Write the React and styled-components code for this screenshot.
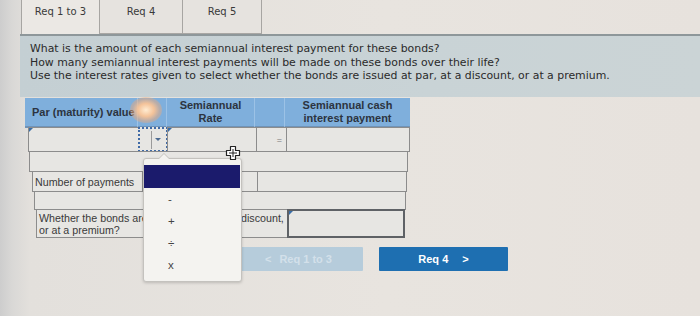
import React from 'react';
import styled, { createGlobalStyle } from 'styled-components';

const Global = createGlobalStyle`
  html, body { margin: 0; padding: 0; }
  body { width: 700px; height: 316px; overflow: hidden; background: #e4e0db; }
`;

const Screen = styled.div`
  position: relative;
  width: 700px;
  height: 316px;
  overflow: hidden;
  display: flex;
  flex-direction: column;
  background: linear-gradient(90deg, #cdcdcd 0px, #d9d8d6 12px, #e3e0dc 30px, #e8e4df 55%, #e7e2dd 100%);
  font-family: "DejaVu Sans", Verdana, sans-serif;
  color: #2d2d2d;
`;

const TabBar = styled.div`
  display: flex;
  height: 34px;
  padding-left: 22px;
`;

const Tab = styled.div`
  width: ${p => p.$w}px;
  box-sizing: border-box;
  height: 34px;
  padding-top: 5px;
  text-align: center;
  font-size: 10px;
  line-height: 14px;
  color: #3a3a3a;
  background: ${p => (p.$active ? '#ebe8e4' : '#e6e3df')};
  border-left: 1px solid #a7a5a2;
  border-right: 1px solid #a7a5a2;
  border-bottom: ${p => (p.$active ? 'none' : '1px solid #a9a7a4')};
  margin-left: -1px;
`;

const Question = styled.div`
  margin-left: 20px;
  height: 63px;
  box-sizing: border-box;
  border-top: 2px solid #8e979a;
  background: linear-gradient(90deg, #c4cfd3 0%, #c9d3d6 60%, #cbd4d6 100%);
  padding: 6px 0 0 10px;
  font-size: 10.9px;
  line-height: 13.5px;
  color: #2a2a2a;
  white-space: nowrap;
`;

const TableWrap = styled.div`
  margin-top: 1px;
  margin-left: 25px;
  width: 385px;
  font-family: "Liberation Sans", Arial, sans-serif;
  font-size: 10.7px;
  color: #333;
`;

const Grid = styled.div`
  display: grid;
  grid-template-columns: ${p => p.$cols};
  margin-left: ${p => p.$inL || 0}px;
  margin-right: ${p => p.$inR || 0}px;
  height: ${p => p.$h}px;
`;

const HeadCell = styled.div`
  background: #7fafdc;
  border-right: 1px solid #9cc2e6;
  border-bottom: 2px solid #6f93b8;
  display: flex;
  align-items: center;
  justify-content: ${p => (p.$left ? 'flex-start' : 'center')};
  padding-left: ${p => (p.$left ? 7 : 0)}px;
  text-align: center;
  font-size: 11px;
  font-weight: bold;
  line-height: 13px;
  color: #2c3440;
  box-sizing: border-box;
  &:last-child { border-right: none; }
`;

const Cell = styled.div`
  position: relative;
  box-sizing: border-box;
  background: #e7e6e3;
  border: ${p => (p.$strong ? '2px solid #5f6266' : '1px solid #8c8c8c')};
  margin-left: -1px;
  margin-top: -1px;
  display: flex;
  align-items: center;
  justify-content: ${p => (p.$right ? 'flex-end' : 'flex-start')};
  padding-left: ${p => (p.$pad ? 2 : 0)}px;
  padding-right: ${p => (p.$right ? 4 : 0)}px;
  color: #3a3a3a;
  line-height: 12px;
  white-space: nowrap;
  overflow: hidden;
  &::before {
    content: '';
    display: ${p => (p.$marker ? 'block' : 'none')};
    position: absolute;
    left: 0;
    top: 0;
    border-left: 4px solid #3a6ea8;
    border-bottom: 4px solid transparent;
  }
`;

const Spread = styled.span`
  word-spacing: 0.5px;
`;

const Operator = styled.div`
  position: relative;
  box-sizing: border-box;
  margin-left: -1px;
  margin-top: -1px;
  border: 2px dotted #3f6aa6;
  background: #e7e6e3;
  display: flex;
  align-items: center;
  justify-content: flex-end;
  padding-right: 3px;
`;

const OpInner = styled.div`
  width: 11px;
  height: 18px;
  border-left: 1px solid #9a9a9a;
  display: flex;
  align-items: center;
  justify-content: center;
  &::after {
    content: '';
    border-left: 3px solid transparent;
    border-right: 3px solid transparent;
    border-top: 3px solid #4d6a90;
  }
`;

const Eq = styled.span`
  font-size: 9px;
  color: #777;
`;

const Footer = styled.div`
  display: flex;
  gap: 16px;
  margin-top: 9px;
  padding-left: 234px;
`;

const Btn = styled.div`
  width: 129px;
  height: 24px;
  display: flex;
  align-items: center;
  justify-content: center;
  gap: ${p => (p.$primary ? 14 : 8)}px;
  background: ${p => (p.$primary ? '#1e6fb1' : '#b6ccdb')};
  color: ${p => (p.$primary ? '#ffffff' : '#d3e0ea')};
  font-family: "Liberation Sans", Arial, sans-serif;
  font-size: 11px;
  font-weight: bold;
  border-radius: 1px;
`;

const Menu = styled.div`
  position: absolute;
  left: 143px;
  top: 158px;
  width: 99px;
  height: 124px;
  box-sizing: border-box;
  background: #f4f3f0;
  border: 1px solid #c4c2be;
  border-radius: 3px;
  box-shadow: 0 1px 3px rgba(0, 0, 0, 0.18);
  padding-top: 6px;
  font-family: "Liberation Sans", Arial, sans-serif;
  font-size: 11.5px;
  color: #444;
  &::before {
    content: '';
    position: absolute;
    left: 14px;
    top: -6px;
    border-left: 6px solid transparent;
    border-right: 6px solid transparent;
    border-bottom: 6px solid #c4c2be;
  }
  &::after {
    content: '';
    position: absolute;
    left: 15px;
    top: -5px;
    border-left: 5px solid transparent;
    border-right: 5px solid transparent;
    border-bottom: 5px solid #f4f3f0;
  }
`;

const MenuItem = styled.div`
  height: ${p => (p.$sel ? 23 : 22)}px;
  margin-right: 1px;
  display: flex;
  align-items: center;
  padding-left: 24px;
  background: ${p => (p.$sel ? '#1b1b6c' : 'transparent')};
`;

const Cursor = styled.svg`
  position: absolute;
  left: 225px;
  top: 145px;
`;

const Glare = styled.div`
  position: absolute;
  left: 130px;
  top: 97px;
  width: 32px;
  height: 26px;
  border-radius: 50%;
  background: radial-gradient(ellipse at center, rgba(255, 236, 210, 1) 0%, rgba(250, 196, 150, 0.95) 35%, rgba(240, 170, 120, 0.5) 60%, rgba(230, 170, 130, 0) 100%);
`;

export default function App() {
  return (
    <Screen>
      <Global />
      <TabBar>
        <Tab $w={79} $active>Req 1 to 3</Tab>
        <Tab $w={84}>Req 4</Tab>
        <Tab $w={80}>Req 5</Tab>
      </TabBar>
      <Question>
        <div>What is the amount of each semiannual interest payment for these bonds?</div>
        <div>How many semiannual interest payments will be made on these bonds over their life?</div>
        <div>Use the interest rates given to select whether the bonds are issued at par, at a discount, or at a premium.</div>
      </Question>
      <TableWrap>
        <Grid $cols="113px 29px 88px 30px 125px" $h={30}>
          <HeadCell $left>Par (maturity) value</HeadCell>
          <HeadCell />
          <HeadCell>Semiannual<br />Rate</HeadCell>
          <HeadCell />
          <HeadCell>Semiannual cash<br />interest payment</HeadCell>
        </Grid>
        <Grid $cols="110px 29px 89px 30px 123px" $inL={4} $inR={2} $h={24}>
          <Cell $marker />
          <Operator><OpInner /></Operator>
          <Cell $marker />
          <Cell $right><Eq>=</Eq></Cell>
          <Cell />
        </Grid>
        <Grid $cols="1fr" $inL={5} $inR={2} $h={20}>
          <Cell />
        </Grid>
        <Grid $cols="110px 115px 1fr" $inL={8} $inR={3} $h={20}>
          <Cell $pad>Number of payments</Cell>
          <Cell />
          <Cell />
        </Grid>
        <Grid $cols="1fr" $inL={10} $inR={4} $h={18}>
          <Cell />
        </Grid>
        <Grid $cols="251px 1fr" $inL={12} $inR={5} $h={28}>
          <Cell $pad>
            <div>Whether the bonds are<Spread> issued at par, at a discount,</Spread><br />or at a premium?</div>
          </Cell>
          <Cell $strong $marker />
        </Grid>
      </TableWrap>
      <Footer>
        <Btn><span>&lt;</span><span>Req 1 to 3</span></Btn>
        <Btn $primary><span>Req 4</span><span>&gt;</span></Btn>
      </Footer>
      <Menu>
        <MenuItem $sel />
        <MenuItem>-</MenuItem>
        <MenuItem>+</MenuItem>
        <MenuItem>÷</MenuItem>
        <MenuItem>x</MenuItem>
      </Menu>
      <Glare />
      <Cursor width="16" height="16" viewBox="0 0 16 16">
        <path d="M5.5 1.5 h5 v4 h4 v5 h-4 v4 h-5 v-4 h-4 v-5 h4 z" fill="#ffffff" stroke="#222" strokeWidth="1.2" strokeLinejoin="round" />
        <path d="M8 4 v8 M4 8 h8" stroke="#222" strokeWidth="1" />
      </Cursor>
    </Screen>
  );
}
